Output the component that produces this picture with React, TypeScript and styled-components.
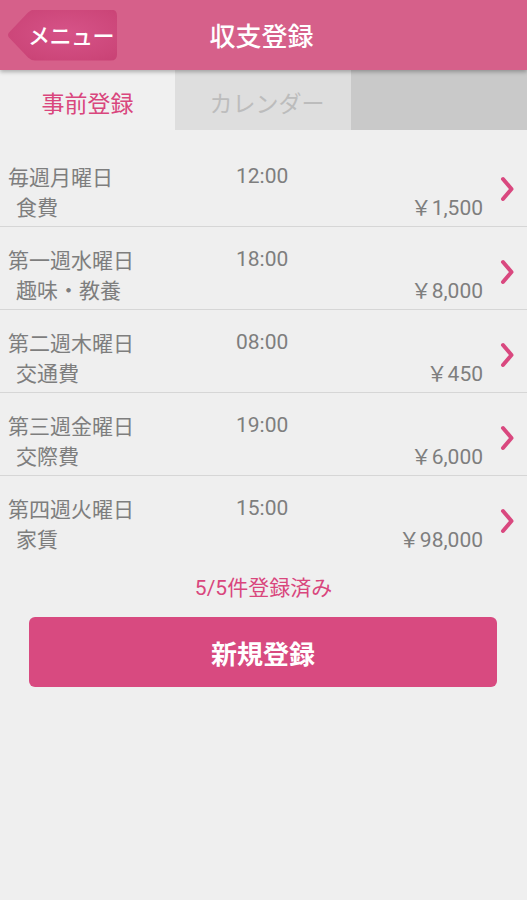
import styled, { createGlobalStyle } from "styled-components";

type Entry = {
  day: string;
  time: string;
  category: string;
  amount: string;
};

const entries: Entry[] = [
  { day: "毎週月曜日", time: "12:00", category: "食費", amount: "￥1,500" },
  { day: "第一週水曜日", time: "18:00", category: "趣味・教養", amount: "￥8,000" },
  { day: "第二週木曜日", time: "08:00", category: "交通費", amount: "￥450" },
  { day: "第三週金曜日", time: "19:00", category: "交際費", amount: "￥6,000" },
  { day: "第四週火曜日", time: "15:00", category: "家賃", amount: "￥98,000" },
];

const Chevron = () => (
  <svg width="16" height="26" viewBox="0 0 16 26">
    <path
      d="M4 3 L12.5 13 L4 23"
      fill="none"
      stroke="#d9487f"
      strokeWidth="4"
      strokeLinecap="round"
      strokeLinejoin="round"
    />
  </svg>
);

const App = () => {
  return (
    <>
      <GlobalStyle />
      <Screen>
        <Header>
          <MenuButton>メニュー</MenuButton>
          <Title>収支登録</Title>
          <span />
        </Header>
        <Tabs>
          <Tab $active>事前登録</Tab>
          <Tab>カレンダー</Tab>
          <TabRest />
        </Tabs>
        <List>
          {entries.map((e) => (
            <Row key={e.day}>
              <Info>
                <Line>
                  <Day>{e.day}</Day>
                  <Time>{e.time}</Time>
                </Line>
                <Line>
                  <Category>{e.category}</Category>
                  <Amount>{e.amount}</Amount>
                </Line>
              </Info>
              <Arrow>
                <Chevron />
              </Arrow>
            </Row>
          ))}
        </List>
        <Count>5/5件登録済み</Count>
        <RegisterButton>新規登録</RegisterButton>
      </Screen>
    </>
  );
};

const GlobalStyle = createGlobalStyle`
  html, body {
    margin: 0;
    padding: 0;
    background: #efefef;
  }
  body {
    font-family: Roboto, "Noto Sans CJK JP", sans-serif;
  }
`;

const Screen = styled.div`
  width: 527px;
  min-height: 900px;
  background: #efefef;
  display: flex;
  flex-direction: column;
`;

const Header = styled.header`
  position: relative;
  z-index: 1;
  height: 70px;
  background: #d6608a;
  box-shadow: 0 2px 4px rgba(0, 0, 0, 0.28);
  display: grid;
  grid-template-columns: 1fr auto 1fr;
  align-items: center;
`;

const MenuButton = styled.button`
  justify-self: start;
  margin-left: 7px;
  width: 110px;
  height: 51px;
  border: none;
  padding: 0 0 2px 18px;
  color: #ffffff;
  font-family: "Noto Sans CJK JP", sans-serif;
  font-size: 22px;
  font-weight: 500;
  letter-spacing: -0.5px;
  background: radial-gradient(
    ellipse at 55% 45%,
    #d65388 0%,
    #cc4679 70%,
    #c63f72 100%
  );
  clip-path: path(
    "M28 0 H104 Q110 0 110 6 V45 Q110 51 104 51 H28 Q24 51 21 48 L2 28 Q0 25.5 2 23 L21 3 Q24 0 28 0 Z"
  );
`;

const Title = styled.h1`
  margin: 0 0 0 -4px;
  color: #ffffff;
  font-family: "Noto Sans CJK JP", sans-serif;
  font-size: 26px;
  font-weight: 500;
  line-height: 70px;
`;

const Tabs = styled.nav`
  display: grid;
  grid-template-columns: 175px 176px 1fr;
  height: 60px;
`;

const Tab = styled.div<{ $active?: boolean }>`
  display: flex;
  align-items: center;
  justify-content: center;
  padding-top: 3px;
  font-family: "Noto Sans CJK JP", sans-serif;
  font-size: 23px;
  font-weight: 400;
  background: ${({ $active }) => ($active ? "#f0f0f0" : "#dedede")};
  color: ${({ $active }) => ($active ? "#d9467d" : "#bcbcbc")};
  padding-left: ${({ $active }) => ($active ? "0" : "8px")};
`;

const TabRest = styled.div`
  background: #c9c9c9;
`;

const List = styled.ul`
  list-style: none;
  margin: 14px 0 0;
  padding: 0;
`;

const Row = styled.li`
  display: flex;
  align-items: center;
  padding: 17px 0 5px 8px;
  border-bottom: 1px solid #d6d6d6;
  &:last-child {
    border-bottom: none;
  }
`;

const Info = styled.div`
  flex: 1;
  display: flex;
  flex-direction: column;
`;

const Line = styled.div`
  display: flex;
  align-items: center;
  height: 30px;
  font-size: 21px;
  color: #7e7e7e;
`;

const Day = styled.span`
  width: 228px;
  font-family: "Noto Sans CJK JP", sans-serif;
`;

const Time = styled.span`
  font-family: Roboto, sans-serif;
`;

const Category = styled.span`
  flex: 1;
  padding-left: 8px;
  font-family: "Noto Sans CJK JP", sans-serif;
`;

const Amount = styled.span`
  font-family: Roboto, "Noto Sans CJK JP", sans-serif;
`;

const Arrow = styled.div`
  box-sizing: border-box;
  width: 44px;
  display: flex;
  justify-content: center;
  padding: 0 0 4px 4px;
`;

const Count = styled.div`
  margin-top: 16px;
  text-align: center;
  font-size: 21px;
  line-height: 28px;
  color: #d9467d;
`;

const RegisterButton = styled.button`
  margin: 15px 30px 0 29px;
  height: 70px;
  border: none;
  border-radius: 6px;
  background: #d84a80;
  color: #ffffff;
  font-family: "Noto Sans CJK JP", sans-serif;
  font-size: 26px;
  font-weight: 700;
`;

export default App;
